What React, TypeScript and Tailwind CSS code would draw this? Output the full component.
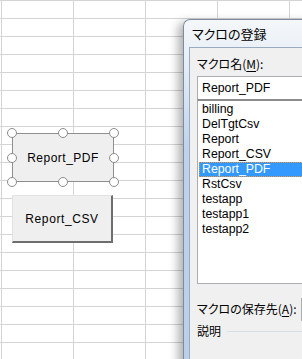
import { FC } from "react";

const macros = [
  "billing",
  "DelTgtCsv",
  "Report",
  "Report_CSV",
  "Report_PDF",
  "RstCsv",
  "testapp",
  "testapp1",
  "testapp2",
];

const jp = "font-['Noto_Sans_CJK_JP',sans-serif] [font-feature-settings:'palt']";
const latin = "font-['Liberation_Sans','Noto_Sans_CJK_JP',sans-serif]";

const Handle: FC<{ pos: string }> = ({ pos }) => (
  <span
    className={`absolute w-[10px] h-[10px] rounded-full border-[1.5px] border-[#8c8c8c] bg-white ${pos}`}
  />
);

const SheetButtons: FC = () => (
  <>
    {/* selected shape with sizing handles */}
    <div className="absolute left-[12px] top-[133px] w-[102px] h-[49px] border border-[#8f8f8f] bg-[#efefef] flex items-center justify-center">
      <span className={`${latin} text-[12px] tracking-[0.5px] text-black`}>Report_PDF</span>
      <Handle pos="left-[-6px] top-[-6px]" />
      <Handle pos="left-[calc(50%-5px)] top-[-6px]" />
      <Handle pos="right-[-6px] top-[-6px]" />
      <Handle pos="left-[-6px] top-[calc(50%-5px)]" />
      <Handle pos="right-[-6px] top-[calc(50%-5px)]" />
      <Handle pos="left-[-6px] bottom-[-6px]" />
      <Handle pos="left-[calc(50%-5px)] bottom-[-6px]" />
      <Handle pos="right-[-6px] bottom-[-6px]" />
    </div>

    <div className="absolute left-[12px] top-[195px] w-[101px] h-[48px] border-t border-l border-[#e2e2e2] border-r-2 border-b-2 border-r-[#6e6e6e] border-b-[#6e6e6e] bg-[#efefef] flex items-center justify-center">
      <span className={`${latin} text-[12px] tracking-[0.6px] text-black`}>Report_CSV</span>
    </div>
  </>
);

const MacroDialog: FC = () => (
  <div className="absolute left-[183px] top-[19px] w-[260px] h-[350px] rounded-tl-[7px] border-l border-t border-[#7d8c9c] bg-[linear-gradient(to_bottom,#f4f7fa,#e4ecf5_50px,#bdd3eb_130px,#b9d0ea)] shadow-[-5px_3px_10px_rgba(0,0,0,0.3)] flex flex-col">
    <div className={`${jp} h-[27px] pl-[8px] flex items-center text-[13px] text-black whitespace-nowrap`}>
      マクロの登録
    </div>

    <div className="ml-[5px] flex-1 border-l border-t border-[#97abc2] bg-[#f0f0f0] pl-[7px] pt-[8px] flex flex-col">
      <div className={`${jp} h-[16px] leading-[16px] text-[12px] text-black whitespace-nowrap`}>
        マクロ名(<span className="underline underline-offset-2">M</span>):
      </div>

      <div className="mt-[4px] w-[200px] h-[23px] shrink-0 border border-[#abadb3] border-b-0 bg-white flex items-center pl-[4px]">
        <span className={`${latin} text-[12.3px] text-black`}>Report_PDF</span>
      </div>

      <div className="w-[200px] h-[185px] shrink-0 border-t-2 border-t-[#8c8c8c] border border-[#abadb3] bg-white pt-[1px] flex flex-col">
        {macros.map((m) => (
          <div
            key={m}
            className={`ml-[1px] h-[15px] shrink-0 pl-[3px] flex items-center ${latin} text-[12.3px] ${
              m === "Report_PDF"
                ? "bg-[#3399ff] text-white outline outline-1 outline-dotted outline-[#e9963f] -outline-offset-1"
                : "text-black"
            }`}
          >
            {m}
          </div>
        ))}
      </div>

      <div className="mt-[13px] w-[220px] h-[24px] shrink-0 flex items-center">
        <span className={`${jp} text-[12px] text-black whitespace-nowrap shrink-0`}>
          マクロの保存先(<span className="underline underline-offset-2">A</span>):
        </span>
        <div className="ml-[4px] w-[100px] h-[23px] shrink-0 border border-[#acacac] bg-[#e9e9e9]" />
      </div>

      <div className="w-[220px] h-[20px] shrink-0 flex items-center">
        <span className={`${jp} text-[12px] text-black whitespace-nowrap shrink-0`}>説明</span>
        <div className="ml-[6px] flex-1 h-px bg-[#d5dfe5]" />
      </div>
    </div>
  </div>
);

const App: FC = () => {
  return (
    <div className="relative w-[302px] h-[359px] overflow-hidden bg-white bg-[linear-gradient(to_right,#d4d4d4_1px,transparent_1px),linear-gradient(to_bottom,#d4d4d4_1px,transparent_1px)] [background-size:72px_18px] [background-position:1px_0px]">
      <SheetButtons />
      <MacroDialog />
    </div>
  );
};

export default App;
